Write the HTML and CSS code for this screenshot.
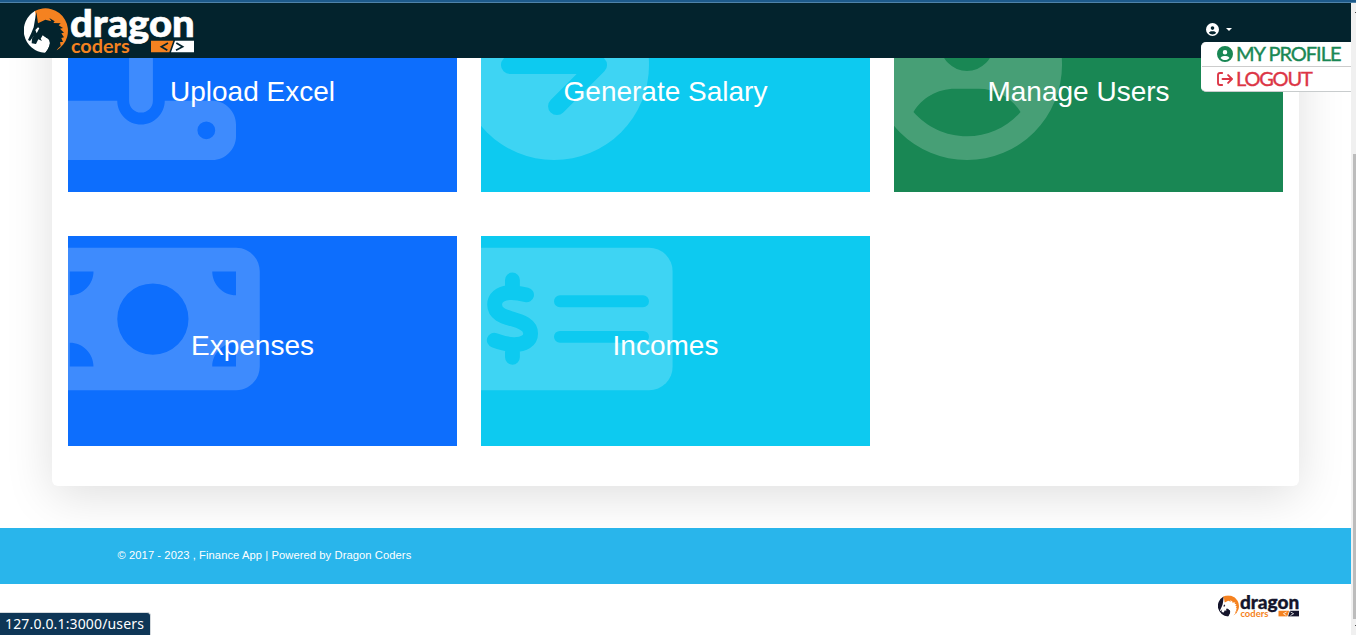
FILE: index.html
```html
<!DOCTYPE html>
<html lang="en">
<head>
<meta charset="utf-8">
<title>Finance App</title>
<link rel="stylesheet" href="styles.css">
</head>
<body>
<svg class="defs" aria-hidden="true">
  <symbol id="emblem" viewBox="0 0 510 135">
    <path fill="#f58220" d="M31 10A67 67 0 1 1 98 127L108 108Q112 68 82 52L40 54Z"/>
    <path fill="currentColor" d="M33 9A67 67 0 0 0 62 134Q72 132 80 100Q70 78 60 72L40 60Z"/>
    <path class="logo-dragon" d="M37 12L42 46L64 35L82 40L76 30L92 40L88 45L110 46L104 52L117 60L108 62L120 74L112 76L120 88L112 90L117 102L108 102L110 114L99 124L90 133L64 134Q83 112 75 96L56 82L50 92L54 99L43 94L36 108L23 106L24 92L31 82L18 99L12 96L22 75L29 58Z"/>
    <path fill="currentColor" d="M59 86L74 94L67 100ZM34 66L42 58L46 61L38 76Z"/>
    <path fill="#f58220" d="M381 98H448L436 133H381Z"/>
    <path fill="currentColor" d="M453 98H510V133H441Z"/>
    <path class="logo-code" d="M432 105L412 116L430 127M457 105L476 116L456 127"/>
  </symbol>
  <symbol id="user" viewBox="0 0 512 512">
    <path fill="currentColor" fill-rule="evenodd" d="M256 0a256 256 0 1 0 0 512a256 256 0 1 0 0-512zM256 128a72 72 0 1 1 0 144a72 72 0 1 1 0-144zM256 448c-57.6 0-109.1-25.4-144.3-65.5C133.9 345.1 175.5 320 224 320h64c47.5 0 89.1 25.1 112.3 62.5C365.1 422.6 313.6 448 256 448z"/>
  </symbol>
</svg>

<div class="window-edge"></div>
<div class="browser">
  <div class="page">
    <header class="navbar">
      <svg class="brand" viewBox="0 0 510 135">
        <use href="#emblem" width="510" height="135"/>
        <text class="logo-big" x="138" y="88" textLength="374" lengthAdjust="spacingAndGlyphs">dragon</text>
        <text class="logo-small" x="141" y="134" textLength="176" lengthAdjust="spacingAndGlyphs">coders</text>
      </svg>
      <div class="account">
        <svg class="account-icon"><use href="#user"/></svg>
        <span class="caret"></span>
        <div class="menu">
          <a class="menu-item profile"><svg class="menu-icon"><use href="#user"/></svg><span>MY PROFILE</span></a>
          <a class="menu-item logout"><svg class="menu-icon" viewBox="0 0 512 512"><path class="line" d="M165 64H96Q32 64 32 128V384Q32 448 96 448H165M176 256H475M355 130L480 256L355 382"/></svg><span>LOGOUT</span></a>
        </div>
      </div>
    </header>

    <main class="content">
      <section class="panel">
        <a class="tile blue">
          <svg class="tile-icon" viewBox="0 0 512 512"><path fill="#fff" d="M288 109.3V352c0 17.7-14.3 32-32 32s-32-14.3-32-32V109.3l-73.4 73.4c-12.5 12.5-32.8 12.5-45.3 0s-12.5-32.8 0-45.3l128-128c12.5-12.5 32.8-12.5 45.3 0l128 128c12.5 12.5 12.5 32.8 0 45.3s-32.8 12.5-45.3 0L288 109.3zM64 352H192c0 35.3 28.7 64 64 64s64-28.7 64-64H448c35.3 0 64 28.7 64 64v32c0 35.3-28.7 64-64 64H64c-35.3 0-64-28.7-64-64V416c0-35.3 28.7-64 64-64zM432 456a24 24 0 1 0 0-48 24 24 0 1 0 0 48z"/></svg>
          <h3>Upload Excel</h3>
        </a>
        <a class="tile cyan">
          <svg class="tile-icon" viewBox="0 0 512 512">
            <mask id="arrow-cut"><circle cx="256" cy="256" r="256" fill="#fff"/><path class="cut arrow" d="M137 256H375M264 145L375 256L264 367"/></mask>
            <rect width="512" height="512" fill="#fff" mask="url(#arrow-cut)"/>
          </svg>
          <h3>Generate Salary</h3>
        </a>
        <a class="tile green">
          <svg class="tile-icon"><use href="#user"/></svg>
          <h3>Manage Users</h3>
        </a>
        <a class="tile blue">
          <svg class="tile-icon wide" viewBox="0 0 576 512"><path fill="#fff" d="M64 64C28.7 64 0 92.7 0 128V384c0 35.3 28.7 64 64 64H512c35.3 0 64-28.7 64-64V128c0-35.3-28.7-64-64-64H64zm64 320H64V320c35.3 0 64 28.7 64 64zM64 192V128h64c0 35.3-28.7 64-64 64zM448 384c0-35.3 28.7-64 64-64v64H448zm64-192c-35.3 0-64-28.7-64-64h64v64zM288 160a96 96 0 1 1 0 192 96 96 0 1 1 0-192z"/></svg>
          <h3>Expenses</h3>
        </a>
        <a class="tile cyan">
          <svg class="tile-icon wide" viewBox="0 0 576 512">
            <mask id="check-cut">
              <rect y="64" width="576" height="384" rx="64" fill="#fff"/>
              <path class="cut rule" d="M272 208H496M272 304H496"/>
              <path class="cut dollar" d="M144 151V180M144 330V359M182 191C158 185 150 184 136 185C108 187 96 200 96 217C96 244 124 250 144 256C168 263 193 272 193 295C193 314 176 326 146 325C128 324 112 319 95 313"/>
            </mask>
            <rect width="576" height="512" fill="#fff" mask="url(#check-cut)"/>
          </svg>
          <h3>Incomes</h3>
        </a>
      </section>
    </main>

    <footer>
      <div class="copyright">© 2017 - 2023 , Finance App | Powered by Dragon Coders</div>
      <div class="footer-brand">
        <svg class="small-logo" viewBox="0 0 510 135">
          <use href="#emblem" width="510" height="135"/>
          <text class="logo-big" x="138" y="88" textLength="374" lengthAdjust="spacingAndGlyphs">dragon</text>
          <text class="logo-small" x="141" y="134" textLength="176" lengthAdjust="spacingAndGlyphs">coders</text>
        </svg>
      </div>
    </footer>
  </div>
  <div class="scrollbar"><i class="arrow-mark"></i><div class="thumb"></div><i class="arrow-mark"></i></div>
</div>
<div class="status">127.0.0.1:3000/users</div>
</body>
</html>
```
FILE: styles.css
```css
* { box-sizing: border-box; }
body {
  margin: 0;
  height: 635px;
  overflow: hidden;
  background: #fff;
  font-family: "Liberation Sans", Arial, sans-serif;
}
.defs { position: absolute; width: 0; height: 0; }
svg { display: block; flex: none; }
.window-edge { height: 3px; background: #1d5a8b; border-bottom: 1px solid #4f83a9; }
.browser { display: flex; height: 632px; }
.page { width: 1351px; display: flex; flex-direction: column; overflow: hidden; }

.navbar {
  height: 55px;
  flex: none;
  display: flex;
  justify-content: space-between;
  padding: 5px 119px 0 24px;
  background: #03232d;
  position: relative;
  z-index: 2;
}
.brand { width: 170px; height: 45px; color: #fff; --ink: #03232d; }
.logo-dragon { fill: var(--ink); }
.logo-big { font: 900 116px Lato, sans-serif; fill: currentColor; stroke: currentColor; stroke-width: 2; }
.logo-small { font: 700 59px Lato, sans-serif; fill: #f58220; }
.logo-code { fill: none; stroke: var(--ink); stroke-width: 5; }

.account { display: flex; position: relative; padding-top: 15px; gap: 7px; height: 34px; color: #fff; }
.account-icon { width: 13px; height: 13px; }
.caret { margin-top: 5px; width: 6px; height: 3px; border: 3px solid transparent; border-top-color: #fff; border-bottom: 0; }
.menu {
  position: absolute;
  left: -5px;
  top: 34px;
  width: 160px;
  height: 50px;
  background: #fff;
  border: 1px solid #c8cccd;
  border-top: 0;
  border-left-color: #fff;
  border-radius: 5px;
}
.menu-item {
  display: flex;
  align-items: center;
  height: 25px;
  padding-left: 15px;
  gap: 3px;
  font: 400 20px/22px Lato, sans-serif;
  white-space: nowrap;
}
.menu-item + .menu-item { height: 24px; }
.menu-item span { padding-bottom: 2px; -webkit-text-stroke: .4px currentColor; }
.profile { color: #198754; border-bottom: 1px solid #ccc; letter-spacing: -1px; }
.logout { color: #dc3545; letter-spacing: -1.2px; }
.menu-icon { width: 16px; height: 16px; }
.line { fill: none; stroke: currentColor; stroke-width: 60; stroke-linecap: round; stroke-linejoin: round; }

.content { height: 470px; flex: none; overflow: hidden; }
.panel {
  margin: -116px 52px 0;
  padding: 40px 16px;
  display: grid;
  grid-template-columns: repeat(3, 1fr);
  gap: 44px 24px;
  background: #fff;
  border-radius: 6px;
  box-shadow: 0 10px 48px rgba(0, 0, 0, .13);
}
.tile { height: 210px; position: relative; overflow: hidden; color: #fff; display: flex; align-items: center; justify-content: center; padding: 10px 20px 0 0; }
.tile h3 { margin: 0; font-size: 28px; font-weight: 400; line-height: 34px; position: relative; }
.tile-icon { position: absolute; left: -22px; top: -12px; width: 190px; height: 190px; opacity: .2; }
.tile-icon.wide { width: 213.75px; }
.blue { background: #0d6efd; }
.cyan { background: #0dcaf0; }
.green { background: #198754; }
.cut { fill: none; stroke: #000; stroke-linecap: round; stroke-linejoin: round; }
.arrow { stroke-width: 48; }
.rule { stroke-width: 32; }
.dollar { stroke-width: 40; }

.copyright { height: 56px; padding-left: 117.5px; background: #29b5eb; color: #fff; font-size: 11.2px; letter-spacing: .075px; line-height: 55px; }
.footer-brand { display: flex; justify-content: flex-end; padding: 11px 52px 0 0; }
.small-logo { width: 81px; height: 22px; color: #15152c; --ink: #fff; }

.scrollbar { width: 5px; background: #f0f0f0; padding: 9px 0 8px 2px; display: flex; flex-direction: column; }
.thumb { height: 465px; background: #bcbcbc; margin-top: 141px; }
.arrow-mark { width: 1px; height: 1px; background: #505050; align-self: flex-end; }
.thumb + .arrow-mark { margin-top: 6px; }
.status {
  position: absolute;
  left: 0;
  bottom: 0;
  width: 151px;
  height: 23px;
  padding-left: 5px;
  background: #0e3656;
  border-top: 1px solid #d4d9dd;
  border-right: 1px solid #d4d9dd;
  border-radius: 0 4px 0 0;
  color: #fff;
  font: 14px/21px "Noto Sans", sans-serif;
  letter-spacing: .15px;
}
```
